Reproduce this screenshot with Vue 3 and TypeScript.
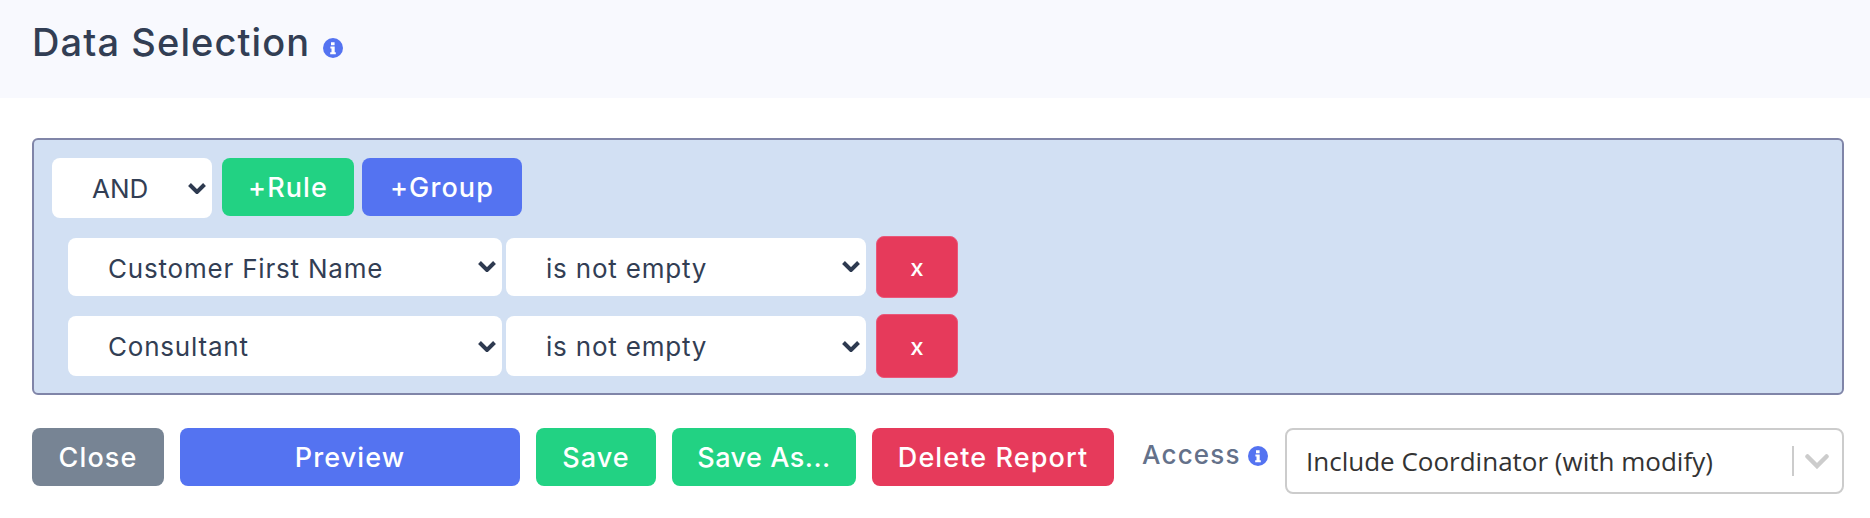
<script setup lang="ts">
interface Rule {
  field: string
  op: string
}

const rules: Rule[] = [
  { field: 'Customer First Name', op: 'is not empty' },
  { field: 'Consultant', op: 'is not empty' },
]
</script>

<template>
  <div class="page">
    <header class="head">
      <h1>Data Selection</h1>
      <svg class="info info--title" viewBox="0 0 20 20" aria-hidden="true">
        <circle cx="10" cy="10" r="10" />
        <path d="M8 4.2h3.6v3H8zM7.4 8.6h4.3v5.6h1.1v2H7.2v-2h1.3v-3.6H7.4z" fill="#fff" />
      </svg>
    </header>

    <section class="builder">
      <div class="top-row">
        <div class="sel sel--cond">
          <select>
            <option>AND</option>
            <option>OR</option>
          </select>
          <svg class="chev" viewBox="0 0 18 12"><path d="M1.5 2.5L9 10l7.5-7.5" /></svg>
        </div>
        <button type="button" class="btn green add-rule">+Rule</button>
        <button type="button" class="btn blue add-group">+Group</button>
      </div>

      <div v-for="(r, i) in rules" :key="i" class="rule" :class="{ 'rule--last': i === 1 }">
        <div class="sel sel--field">
          <select>
            <option>{{ r.field }}</option>
          </select>
          <svg class="chev" viewBox="0 0 18 12"><path d="M1.5 2.5L9 10l7.5-7.5" /></svg>
        </div>
        <div class="sel sel--op">
          <select>
            <option>{{ r.op }}</option>
          </select>
          <svg class="chev" viewBox="0 0 18 12"><path d="M1.5 2.5L9 10l7.5-7.5" /></svg>
        </div>
        <button type="button" class="btn red remove">x</button>
      </div>
    </section>

    <footer class="actions">
      <button type="button" class="btn gray close">Close</button>
      <button type="button" class="btn blue preview">Preview</button>
      <button type="button" class="btn green save">Save</button>
      <button type="button" class="btn green save-as">Save As...</button>
      <button type="button" class="btn red delete">Delete Report</button>
      <span class="access">Access</span>
      <svg class="info info--access" viewBox="0 0 20 20" aria-hidden="true">
        <circle cx="10" cy="10" r="10" />
        <path d="M8 4.2h3.6v3H8zM7.4 8.6h4.3v5.6h1.1v2H7.2v-2h1.3v-3.6H7.4z" fill="#fff" />
      </svg>
      <div class="combo">
        <span class="combo__value">Include Coordinator (with modify)</span>
        <span class="combo__sep"></span>
        <svg class="combo__arrow" viewBox="0 0 24 16"><path d="M2.5 3.5l9.5 9.5 9.5-9.5" /></svg>
      </div>
    </footer>
  </div>
</template>

<style>
html,
body {
  margin: 0;
  background: #fff;
}
</style>

<style scoped>
.page {
  width: 1870px;
  height: 518px;
  overflow: hidden;
  font-family: Inter, "Liberation Sans", sans-serif;
  color: #2e3a50;
}

.head {
  height: 98px;
  box-sizing: border-box;
  padding: 20px 32px 0;
  background: #f8f9fe;
  display: flex;
  align-items: flex-start;
}

.head h1 {
  margin: 0;
  font-size: 38px;
  letter-spacing: 1.1px;
  line-height: 44px;
  font-weight: 500;
  color: #323e54;
}

.info {
  fill: #5473f1;
  flex: none;
}

.info--title {
  width: 20px;
  height: 20px;
  margin: 18px 0 0 13px;
}

.builder {
  margin: 40px 26px 0 32px;
  height: 257px;
  box-sizing: border-box;
  border: 2px solid #8085a8;
  border-radius: 6px;
  background: #d2e0f3;
  padding: 18px;
}

.top-row {
  display: flex;
  align-items: flex-start;
}

.rule {
  display: flex;
  align-items: center;
  margin: 18px 0 0 16px;
}

.rule--last {
  margin-top: 16px;
}

.sel {
  position: relative;
  height: 58px;
}

.sel select {
  display: block;
  width: 100%;
  height: 100%;
  box-sizing: border-box;
  appearance: none;
  border: 0;
  border-radius: 8px;
  background: #fff;
  font-family: inherit;
  font-size: 26px;
  letter-spacing: 0.8px;
  color: #323e54;
  padding: 2px 40px 0 40px;
}

.rule--last .sel {
  height: 60px;
}

.rule--last .sel select,
.sel--cond select {
  padding-top: 0;
}

.sel--cond {
  width: 160px;
  height: 60px;
}

.sel--cond select {
  letter-spacing: 0;
}

.sel--field {
  width: 434px;
}

.sel--op {
  width: 360px;
  margin-left: 4px;
}

.chev {
  position: absolute;
  top: 22px;
  right: 6px;
  width: 18px;
  height: 12px;
  pointer-events: none;
}

.sel--cond .chev,
.rule--last .chev {
  top: 24px;
}

.chev path {
  fill: none;
  stroke: #2e3a50;
  stroke-width: 4;
}

.btn {
  border: 0;
  border-radius: 8px;
  color: #fff;
  font-family: inherit;
  font-size: 27px;
  letter-spacing: 1.1px;
  font-weight: 500;
  height: 58px;
  padding: 0;
}

.green {
  background: #22d283;
}

.blue {
  background: #5473f1;
}

.red {
  background: #e63a5b;
}

.gray {
  background: #778494;
}

.add-rule {
  width: 132px;
  margin-left: 10px;
}

.add-group {
  width: 160px;
  margin-left: 8px;
}

.remove {
  width: 82px;
  height: 62px;
  margin-left: 10px;
  font-size: 24px;
  letter-spacing: 0;
  border: 1px solid #e9587a;
}

.rule--last .remove {
  height: 64px;
}

.actions {
  display: flex;
  align-items: flex-start;
  margin: 33px 26px 0 32px;
}

.close {
  width: 132px;
}

.preview {
  width: 340px;
  margin-left: 16px;
}

.save {
  width: 120px;
  margin-left: 16px;
}

.save-as {
  width: 184px;
  margin-left: 16px;
  letter-spacing: 0.5px;
}

.delete {
  width: 242px;
  margin-left: 16px;
}

.access {
  margin-left: 28px;
  font-size: 26px;
  letter-spacing: 1.2px;
  font-weight: 500;
  line-height: 54px;
  color: #64718a;
}

.info--access {
  width: 20px;
  height: 20px;
  margin: 18px 0 0 7px;
}

.combo {
  margin-left: auto;
  width: 559px;
  height: 66px;
  box-sizing: border-box;
  border: 2px solid #ccc;
  border-radius: 8px;
  display: flex;
  align-items: center;
  padding-left: 19px;
  font-family: "Open Sans", sans-serif;
  font-size: 26px;
  color: #333;
}

.combo__value {
  flex: 1;
}

.combo__sep {
  width: 2px;
  height: 30px;
  background: #ccc;
}

.combo__arrow {
  width: 24px;
  height: 16px;
  margin: 0 13px 0 11px;
}

.combo__arrow path {
  fill: none;
  stroke: #ccc;
  stroke-width: 4.5;
  stroke-linecap: round;
}
</style>
